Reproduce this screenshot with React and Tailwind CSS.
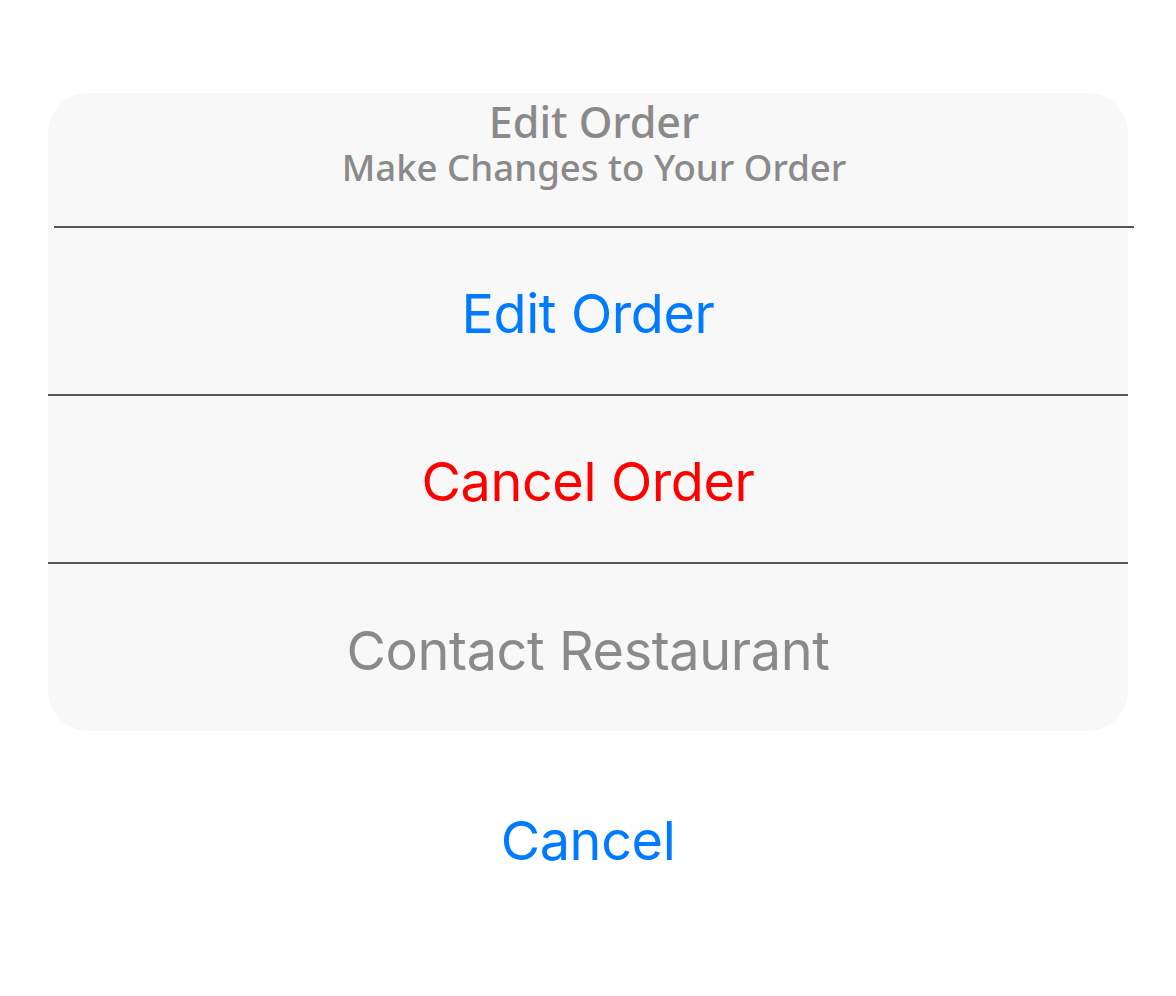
export default function App() {
  const rows = [
    { label: "Edit Order", color: "text-[#007aff]", h: "h-[166.5px]" },
    { label: "Cancel Order", color: "text-[#ff0000]", h: "h-[166.5px]" },
    { label: "Contact Restaurant", color: "text-[#8a8a8a]", h: "h-[167.5px]" },
  ];

  return (
    <div className="w-[1176px] h-[996px] bg-white pt-[93px] px-[48px] font-['Inter','Liberation_Sans',sans-serif]">
      <div className="w-[1080px] bg-[#f8f8f8] rounded-[40px]">
        {/* header sits 6px right of the card, same as its divider */}
        <div className="h-[133px] ml-[6px] -mr-[6px] flex flex-col items-center pt-[5px] text-[#8a8a8a] font-['Noto_Sans','Open_Sans',sans-serif] font-medium">
          <p className="text-[43px] leading-[47px]">Edit Order</p>
          <p className="text-[36.6px] leading-[44px]">Make Changes to Your Order</p>
        </div>
        <div className="h-[1.5px] bg-[#555] ml-[6px] -mr-[6px]" />
        {rows.map((row, i) => (
          <div key={row.label}>
            {i > 0 && <div className="h-[1.5px] bg-[#555]" />}
            <button className={`w-full ${row.h} flex items-center justify-center pt-[6px] text-[54px] tracking-[-0.4px] ${row.color}`}>
              {row.label}
            </button>
          </div>
        ))}
      </div>
      <div className="h-[218px] flex items-center justify-center">
        <button className="text-[54px] tracking-[-0.4px] text-[#007aff]">Cancel</button>
      </div>
    </div>
  );
}
